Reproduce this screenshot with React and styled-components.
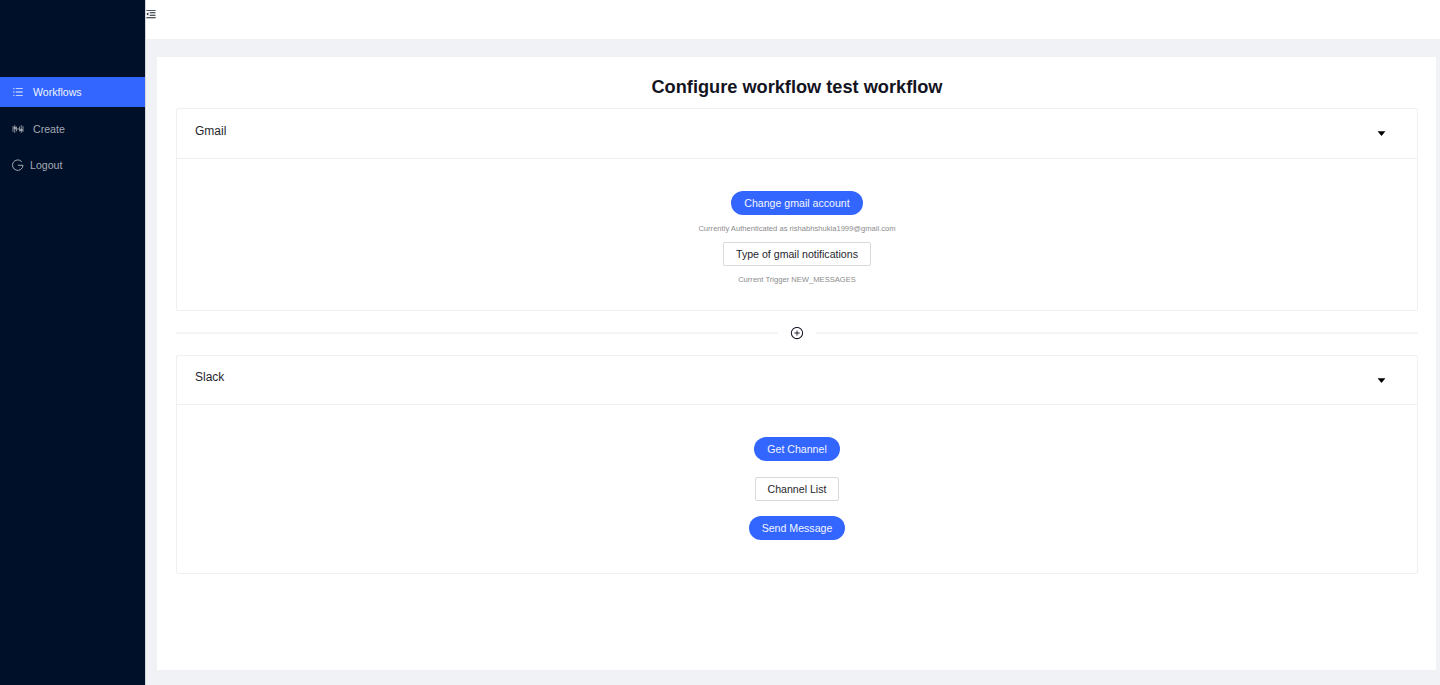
import React from "react";
import styled, { createGlobalStyle } from "styled-components";
import {
  AiOutlineMenuFold,
  AiOutlineUnorderedList,
  AiOutlinePlusCircle,
  AiFillCaretDown,
} from "react-icons/ai";

const GlobalStyle = createGlobalStyle`
  html, body {
    margin: 0;
    padding: 0;
    height: 100%;
    font-family: "Liberation Sans", Arial, sans-serif;
    background: #f0f2f5;
  }
  * {
    box-sizing: border-box;
  }
`;

const Layout = styled.div`
  display: flex;
  height: 685px;
  overflow: hidden;
`;

const Sidebar = styled.aside`
  width: 145px;
  flex-shrink: 0;
  background: #001029;
  padding-top: 77px;
`;

const NavItem = styled.div`
  display: flex;
  align-items: center;
  height: 30px;
  margin-bottom: 6.5px;
  padding-left: 12px;
  font-size: 10.6px;
  background: ${({ $active }) => ($active ? "#3366ff" : "transparent")};
  color: ${({ $active }) => ($active ? "#f0f4ff" : "#a5a9b2")};
  svg {
    flex-shrink: 0;
  }
`;

const NavLabel = styled.span`
  margin-left: ${({ $gap }) => $gap}px;
`;

const Main = styled.div`
  flex: 1;
  display: flex;
  flex-direction: column;
  min-width: 0;
  border-left: 1px solid #d4d6da;
`;

const Header = styled.header`
  height: 39px;
  flex-shrink: 0;
  background: #fff;
  display: flex;
  align-items: center;
  padding-bottom: 11px;
  overflow: hidden;
  svg {
    font-size: 12px;
    color: #1a1f2e;
    margin-left: -1px;
  }
`;

const Content = styled.main`
  flex: 1;
  background: #f0f2f5;
  padding: 18px 4px 15.5px 11px;
  display: flex;
  min-height: 0;
`;

const Panel = styled.section`
  flex: 1;
  background: #fff;
  padding: 0 18px 0 19px;
`;

const Title = styled.h1`
  margin: 0;
  height: 51px;
  padding-top: 19px;
  font-size: 18.2px;
  line-height: 23px;
  font-weight: 700;
  text-align: center;
  color: #14141f;
`;

const Card = styled.div`
  border: 1px solid #f0f0f0;
  border-radius: 2px;
`;

const CardHead = styled.div`
  height: ${({ $height }) => $height}px;
  border-bottom: 1px solid #f0f0f0;
  display: flex;
  justify-content: space-between;
  padding: ${({ $top }) => $top}px 30px 0 18px;
  font-size: 12px;
  line-height: 14px;
  color: #1f1f2e;
  svg {
    font-size: 11px;
    margin-top: ${({ $top }) => 19 - $top}px;
    color: #000;
  }
`;

const CardBody = styled.div`
  display: flex;
  flex-direction: column;
  align-items: center;
  height: ${({ $height }) => $height}px;
  padding-top: 32px;
`;

const PrimaryButton = styled.button`
  height: 24px;
  padding: 0 13px;
  border: 0;
  border-radius: 12px;
  background: #3366ff;
  color: #f2f5ff;
  font: 10.6px "Liberation Sans", Arial, sans-serif;
  margin-bottom: ${({ $mb }) => $mb || 0}px;
`;

const OutlineButton = styled.button`
  height: 24px;
  padding: 0 12px;
  border: 1px solid #d9d9d9;
  border-radius: 2px;
  background: #fff;
  color: #1f1f2e;
  font: 10.6px "Liberation Sans", Arial, sans-serif;
  margin-bottom: ${({ $mb }) => $mb || 0}px;
`;

const Note = styled.div`
  font-size: 7.6px;
  line-height: 10px;
  color: #8c8c8c;
  margin: ${({ $top }) => $top}px 0 ${({ $bottom }) => $bottom}px;
`;

const Connector = styled.div`
  display: flex;
  align-items: center;
  justify-content: center;
  height: 44px;
  gap: 12px;
  svg {
    font-size: 14px;
    color: #1a1a2a;
    flex-shrink: 0;
  }
`;

const Rule = styled.span`
  flex: 1;
  height: 2px;
  background: #f5f5f5;
`;

const CreateIcon = () => (
  <svg width="12" height="12" viewBox="0 0 24 24" fill="none" stroke="currentColor" strokeWidth="1.6" strokeLinecap="round">
    <path d="M2 7v10M5.5 5v14M9 8v8M15 8v8M18.5 5v14M22 7v10M10 12h4" />
    <circle cx="5.5" cy="10" r="2" fill="currentColor" />
    <circle cx="18.5" cy="14" r="2" fill="currentColor" />
  </svg>
);

const LogoutIcon = () => (
  <svg width="12" height="12" viewBox="0 0 24 24" fill="none" stroke="currentColor" strokeWidth="2">
    <path d="M19.5 5.5A10.5 10.5 0 1 0 22 12.5H12" />
  </svg>
);

export default function App() {
  return (
    <>
      <GlobalStyle />
      <Layout>
        <Sidebar>
          <NavItem $active>
            <AiOutlineUnorderedList size={12} />
            <NavLabel $gap={9}>Workflows</NavLabel>
          </NavItem>
          <NavItem>
            <CreateIcon />
            <NavLabel $gap={9}>Create</NavLabel>
          </NavItem>
          <NavItem>
            <LogoutIcon />
            <NavLabel $gap={6}>Logout</NavLabel>
          </NavItem>
        </Sidebar>
        <Main>
          <Header>
            <AiOutlineMenuFold />
          </Header>
          <Content>
            <Panel>
              <Title>Configure workflow test workflow</Title>
              <Card>
                <CardHead $height={50} $top={15}>
                  <span>Gmail</span>
                  <AiFillCaretDown />
                </CardHead>
                <CardBody $height={151}>
                  <PrimaryButton>Change gmail account</PrimaryButton>
                  <Note $top={9} $bottom={8}>Currently Authenticated as rishabhshukla1999@gmail.com</Note>
                  <OutlineButton>Type of gmail notifications</OutlineButton>
                  <Note $top={9} $bottom={0}>Current Trigger NEW_MESSAGES</Note>
                </CardBody>
              </Card>
              <Connector>
                <Rule />
                <AiOutlinePlusCircle />
                <Rule />
              </Connector>
              <Card>
                <CardHead $height={49} $top={14}>
                  <span>Slack</span>
                  <AiFillCaretDown />
                </CardHead>
                <CardBody $height={168}>
                  <PrimaryButton $mb={16}>Get Channel</PrimaryButton>
                  <OutlineButton $mb={15}>Channel List</OutlineButton>
                  <PrimaryButton>Send Message</PrimaryButton>
                </CardBody>
              </Card>
            </Panel>
          </Content>
        </Main>
      </Layout>
    </>
  );
}
